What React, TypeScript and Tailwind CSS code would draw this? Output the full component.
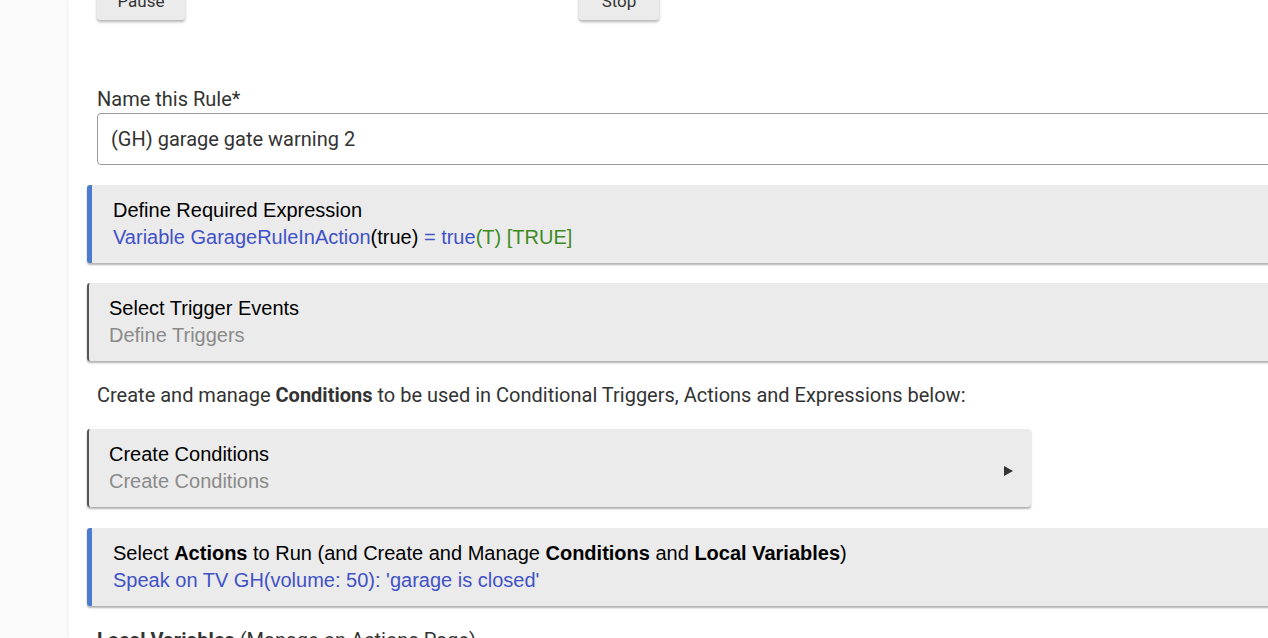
import React from "react";

const roboto = "font-['Roboto','Liberation_Sans',sans-serif]";
const arial = "font-['Liberation_Sans',Arial,sans-serif]";

const Card = ({
  accent,
  width,
  title,
  sub,
  arrow,
}: {
  accent: "blue" | "dark";
  width?: string;
  title: React.ReactNode;
  sub: React.ReactNode;
  arrow?: boolean;
}) => (
  <div
    className={`${width ?? "w-[1300px]"} ${
      accent === "blue"
        ? "border-l-[5px] border-[#4a7bd0] pl-[21px]"
        : "border-l-2 border-[#555] pl-5"
    } -ml-[10px] flex items-center justify-between rounded-[3px] bg-[#ebebeb] py-3 pr-4 shadow-[0_2px_2px_rgba(0,0,0,0.3)] ${arial} text-[20px] leading-[27px]`}
  >
    <div>
      <div className="text-black">{title}</div>
      <div>{sub}</div>
    </div>
    {arrow && (
      <svg width="11" height="12" viewBox="0 0 11 12" className="mt-[6px] mr-[1px]">
        <path d="M1 1 L10 6 L1 11 Z" fill="#333" />
      </svg>
    )}
  </div>
);

export default function App() {
  return (
    <div className="flex h-[638px] w-[1268px] overflow-hidden bg-white">
      <div className="w-[67px] shrink-0 bg-[#fafafa] shadow-[1px_0_2px_rgba(0,0,0,0.08)]" />
      <main className={`flex-1 pl-[30px] ${roboto} text-[20px] text-[#333]`}>
        <div className="-mt-[16px] flex">
          <button className="h-9 w-[88px] rounded-[3px] bg-[#ebebeb] text-[17px] text-[#333] shadow-[0_2px_3px_rgba(0,0,0,0.3)]">
            Pause
          </button>
          <button className="ml-[394px] h-9 w-20 rounded-[3px] bg-[#ebebeb] text-[17px] text-[#333] shadow-[0_2px_3px_rgba(0,0,0,0.3)]">
            Stop
          </button>
        </div>

        <div className="mt-[67px] leading-[24px]">Name this Rule*</div>
        <div className="mt-[2px] flex h-[52px] w-[1300px] items-center rounded-[4px] border border-[#999] px-[13px]">
          (GH) garage gate warning 2
        </div>

        <div className="mt-5">
          <Card
            accent="blue"
            title="Define Required Expression"
            sub={
              <>
                <span className="text-[#4152c6]">Variable GarageRuleInAction</span>
                <span className="text-black">(true)</span>
                <span className="text-[#4152c6]"> = true</span>
                <span className="text-[#3d8b1f]">(T) [TRUE]</span>
              </>
            }
          />
        </div>

        <div className="mt-5">
          <Card
            accent="dark"
            title="Select Trigger Events"
            sub={<span className="text-[#8a8a8a]">Define Triggers</span>}
          />
        </div>

        <div className="mt-[22px] leading-[24px]">
          Create and manage <b className="font-bold">Conditions</b> to be used in
          Conditional Triggers, Actions and Expressions below:
        </div>

        <div className="mt-[22px]">
          <Card
            accent="dark"
            width="w-[944px]"
            title="Create Conditions"
            sub={<span className="text-[#8a8a8a]">Create Conditions</span>}
            arrow
          />
        </div>

        <div className="mt-[21px]">
          <Card
            accent="blue"
            title={
              <>
                Select <b>Actions</b> to Run (and Create and Manage{" "}
                <b>Conditions</b> and <b>Local Variables</b>)
              </>
            }
            sub={
              <span className="text-[#4152c6]">
                Speak on TV GH(volume: 50): 'garage is closed'
              </span>
            }
          />
        </div>

        <div className="mt-[22px] leading-[24px]">
          <b className="font-bold">Local Variables</b> (Manage on Actions Page)
        </div>
      </main>
    </div>
  );
}
